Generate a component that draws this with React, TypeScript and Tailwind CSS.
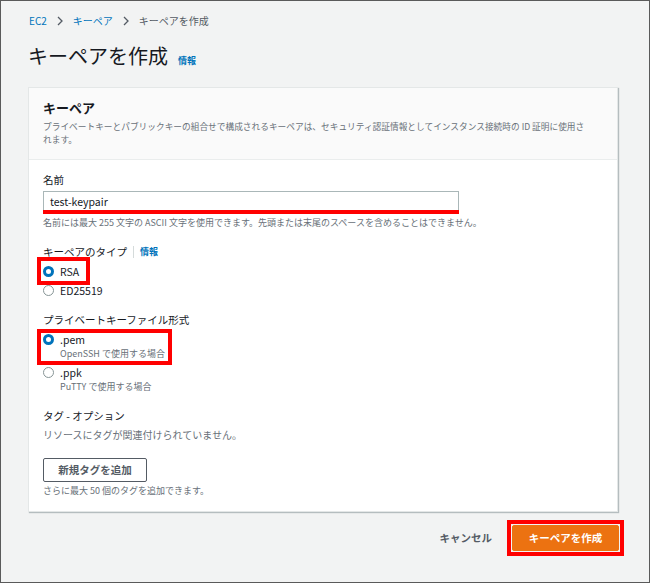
import React from "react";

function Chevron() {
  return (
    <svg width="6" height="10" viewBox="0 0 6 10" className="shrink-0">
      <path d="M1 1l4 4-4 4" fill="none" stroke="#545b64" strokeWidth="1.3" />
    </svg>
  );
}

function Radio({ checked }: { checked?: boolean }) {
  return checked ? (
    <span className="block w-[11px] h-[11px] shrink-0 rounded-full border-[3.5px] border-[#0073bb] bg-white" />
  ) : (
    <span className="block w-[11px] h-[11px] shrink-0 rounded-full border border-[#879596] bg-white" />
  );
}

function Option({ label, sub, checked }: { label: string; sub?: string; checked?: boolean }) {
  return (
    <div className="flex gap-[6px]">
      <div className="h-[15px] flex items-center">
        <Radio checked={checked} />
      </div>
      <div className="flex flex-col">
        <span className="text-[10.5px] leading-[15px]">{label}</span>
        {sub && <span className="text-[9px] leading-[13px] text-[#687078]">{sub}</span>}
      </div>
    </div>
  );
}

export default function App() {
  return (
    <div className="w-[650px] h-[583px] overflow-hidden border border-[#5a5a5a] bg-[#f2f3f3] pl-[27px] pt-[13px] text-[#16191f] font-['Noto_Sans_CJK_JP',sans-serif]">
      {/* breadcrumb */}
      <div className="flex items-center gap-[10px] h-[14px] text-[10px] leading-[14px]">
        <span className="text-[#0073bb] ml-[1px]">EC2</span>
        <Chevron />
        <span className="text-[#0073bb]">キーペア</span>
        <Chevron />
        <span className="text-[#545b64]">キーペアを作成</span>
      </div>

      {/* page title */}
      <div className="mt-[14px] flex items-end gap-[10px] h-[28px]">
        <h1 className="text-[20px] leading-[28px]">キーペアを作成</h1>
        <span className="text-[9px] leading-[14px] font-bold text-[#0073bb] mb-[2px]">情報</span>
      </div>

      {/* card */}
      <div className="mt-[17px] w-[590px] bg-white border border-[#e4e7e7] shadow-[1px_1px_1px_rgba(0,28,36,0.25)]">
        <div className="bg-[#fafafa] border-b border-[#eaeded] px-[14px] pt-[10px] pb-[13px]">
          <h2 className="text-[13px] leading-[20px] font-bold">キーペア</h2>
          <p className="mt-[2px] text-[8.7px] leading-[13px] text-[#687078]">
            <span className="whitespace-nowrap">
              プライベートキーとパブリックキーの組合せで構成されるキーペアは、セキュリティ認証情報としてインスタンス接続時の ID 証明に使用さ
            </span>
            <br />
            れます。
          </p>
        </div>

        <div className="px-[14px] pt-[12px] pb-[13px]">
          <div className="text-[10.5px] leading-[16px]">名前</div>
          <div className="relative mt-[3px] w-[416px] h-[22px] border border-[#aab7b8] flex items-center pl-[6px] text-[10.5px]">
            test-keypair
            <div className="absolute left-[-1px] right-[-1px] bottom-[-2px] h-[4px] bg-[#ff0000]" />
          </div>
          <div className="mt-[3px] text-[9px] leading-[14px] text-[#687078] whitespace-nowrap">
            名前には最大 255 文字の ASCII 文字を使用できます。先頭または末尾のスペースを含めることはできません。
          </div>

          <div className="mt-[14px] flex items-center h-[16px] text-[10.5px] leading-[16px]">
            <span>キーペアのタイプ</span>
            <span className="mx-[6px] w-px h-[12px] bg-[#d5dbdb]" />
            <span className="text-[9px] font-bold text-[#0073bb]">情報</span>
          </div>
          <div className="relative mt-[4px] w-fit">
            <Option label="RSA" checked />
            <div className="absolute left-[-6px] top-[-7px] w-[53px] h-[28px] border-[4px] border-[#ff0000]" />
          </div>
          <div className="mt-[4px]">
            <Option label="ED25519" />
          </div>

          <div className="mt-[14px] text-[10.5px] leading-[16px]">プライベートキーファイル形式</div>
          <div className="relative mt-[4px] w-fit">
            <Option label=".pem" sub="OpenSSH で使用する場合" checked />
            <div className="absolute left-[-6px] top-[-3px] w-[135px] h-[36px] border-[4px] border-[#ff0000]" />
          </div>
          <div className="mt-[5px]">
            <Option label=".ppk" sub="PuTTY で使用する場合" />
          </div>

          <div className="mt-[15px] text-[10.5px] leading-[16px]">タグ - オプション</div>
          <div className="mt-[3px] text-[10px] leading-[16px] text-[#687078]">リソースにタグが関連付けられていません。</div>
          <button className="mt-[15px] w-[104px] h-[24px] border border-[#545b64] rounded-[2px] bg-white text-[10.5px] font-bold text-[#545b64] flex items-center justify-center">
            新規タグを追加
          </button>
          <div className="mt-[2px] text-[9px] leading-[14px] text-[#687078]">さらに最大 50 個のタグを追加できます。</div>
        </div>
      </div>

      {/* footer actions */}
      <div className="mt-[13px] w-[591px] flex items-center justify-end gap-[20px]">
        <span className="text-[10.5px] font-bold text-[#545b64]">キャンセル</span>
        <div className="relative">
          <button className="w-[107px] h-[26px] rounded-[2px] bg-[#ec7211] border border-[#ec7211] text-white text-[10.5px] font-bold flex items-center justify-center">
            キーペアを作成
          </button>
          <div className="absolute -inset-[5px] border-[4px] border-[#ff0000]" />
        </div>
      </div>
    </div>
  );
}
